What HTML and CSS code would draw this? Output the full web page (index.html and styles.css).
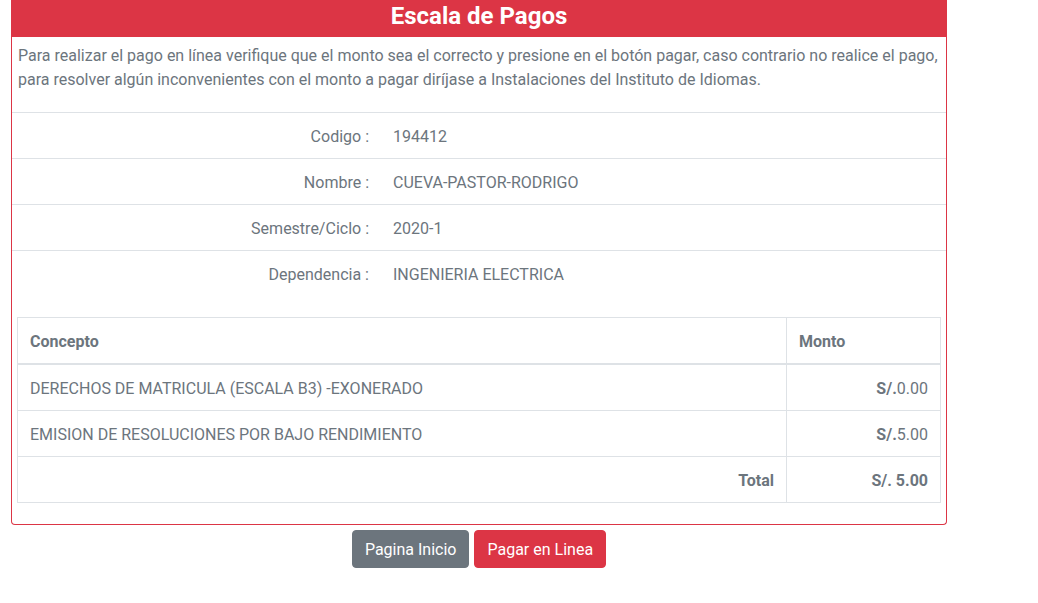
FILE: index.html
```html
<!DOCTYPE html>
<html lang="es">
<head>
<meta charset="utf-8">
<title>Escala de Pagos</title>
<link rel="stylesheet" href="styles.css">
</head>
<body>
<div class="page">
  <div class="card">
    <div class="card-header">Escala de Pagos</div>
    <p class="intro">Para realizar el pago en línea verifique que el monto sea el correcto y presione en el botón pagar, caso contrario no realice el pago, para resolver algún inconvenientes con el monto a pagar diríjase a Instalaciones del Instituto de Idiomas.</p>
    <div class="info">
      <div class="info-row"><div class="info-label">Codigo :</div><div class="info-value">194412</div></div>
      <div class="info-row"><div class="info-label">Nombre :</div><div class="info-value">CUEVA-PASTOR-RODRIGO</div></div>
      <div class="info-row"><div class="info-label">Semestre/Ciclo :</div><div class="info-value">2020-1</div></div>
      <div class="info-row"><div class="info-label">Dependencia :</div><div class="info-value">INGENIERIA ELECTRICA</div></div>
    </div>
    <div class="table-wrap">
      <table class="concepts">
        <thead>
          <tr><th>Concepto</th><th class="col-monto">Monto</th></tr>
        </thead>
        <tbody>
          <tr><td>DERECHOS DE MATRICULA (ESCALA B3) -EXONERADO</td><td class="amount"><b>S/.</b>0.00</td></tr>
          <tr><td>EMISION DE RESOLUCIONES POR BAJO RENDIMIENTO</td><td class="amount"><b>S/.</b>5.00</td></tr>
          <tr class="total"><td class="total-label">Total</td><td class="amount">S/. 5.00</td></tr>
        </tbody>
      </table>
    </div>
  </div>
  <div class="actions">
    <button class="btn btn-secondary" type="button">Pagina Inicio</button>
    <button class="btn btn-danger" type="button">Pagar en Linea</button>
  </div>
</div>
</body>
</html>
```

FILE: styles.css
```css
* { box-sizing: border-box; }

body {
  margin: 0;
  font-family: Roboto, "Noto Sans", sans-serif;
  font-size: 16px;
  line-height: 24px;
  color: #6c757d;
  background: #fff;
}

.page {
  width: 958px;
  padding-left: 11px;
  padding-right: 11px;
}

.card {
  border: 1px solid #dc3545;
  border-top: none;
  border-radius: 0 0 4px 4px;
  background: #fff;
}

.card-header {
  background: #dc3545;
  color: #fff;
  text-align: center;
  font-weight: 700;
  font-size: 24px;
  line-height: 29px;
  height: 37px;
  padding-top: 2px;
  margin: 0 -1px;
}

.intro {
  margin: 0;
  padding: 7px 6px 20px 6px;
}

.info-row {
  display: grid;
  grid-template-columns: 369px 1fr;
  border-top: 1px solid #dee2e6;
}

.info-label,
.info-value {
  padding: 12px 12px 9px 12px;
}

.info-label {
  text-align: right;
}

.table-wrap {
  padding: 21px 5px 21px 5px;
}

.concepts {
  width: 100%;
  border-collapse: collapse;
}

.concepts th,
.concepts td {
  border: 1px solid #dee2e6;
  padding: 12px 12px 9px 12px;
  text-align: left;
  font-weight: 400;
}

.concepts th {
  font-weight: 700;
  border-bottom-width: 2px;
}

.concepts .col-monto {
  width: 154px;
}

.concepts .amount {
  text-align: right;
}

.concepts .total td {
  font-weight: 700;
}

.concepts .total-label {
  text-align: right;
}

.actions {
  display: flex;
  justify-content: center;
  gap: 5px;
  padding-top: 5px;
}

.btn {
  font-family: inherit;
  font-size: 16px;
  line-height: 24px;
  padding: 7px 12px 5px 12px;
  border: 1px solid transparent;
  border-radius: 4px;
  color: #fff;
  cursor: pointer;
}

.btn-secondary {
  background: #6c757d;
  border-color: #6c757d;
}

.btn-danger {
  background: #dc3545;
  border-color: #dc3545;
}
```
